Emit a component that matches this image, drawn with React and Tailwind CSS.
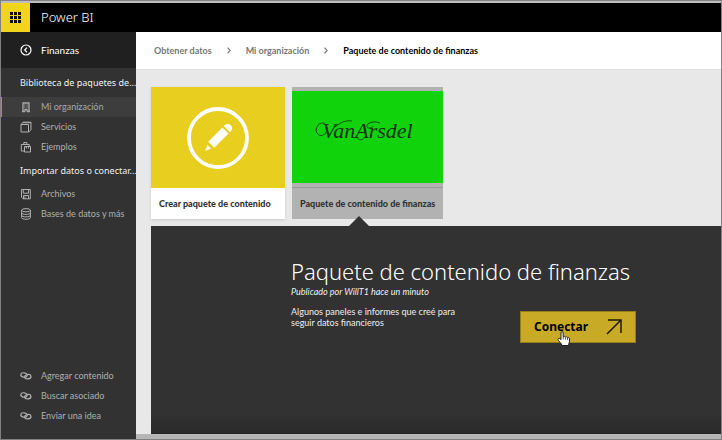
import React from "react";

const iconProps = {
  width: 12,
  height: 12,
  viewBox: "0 0 12 12",
  fill: "none",
  stroke: "currentColor",
  strokeWidth: 1,
  className: "shrink-0",
  "aria-hidden": true,
};

function BuildingIcon() {
  return (
    <svg {...iconProps}>
      <path d="M3 11V2h6v9M2 10.5h3M7 10.5h3M5 10.5V8.5h2v2" strokeWidth="1.3" />
      <path d="M4.2 4h1.2M6.6 4h1.2M4.2 6h1.2M6.6 6h1.2" />
    </svg>
  );
}

function StackIcon() {
  return (
    <svg {...iconProps}>
      <path d="M1 3.5h7.5V11H1z" />
      <path d="M1 3.5 3 1.2h8v7.6L8.7 11M3 1.7h8" />
    </svg>
  );
}

function BagIcon() {
  return (
    <svg {...iconProps}>
      <path d="M4 10H1.3V3.5h8V5M3.8 3.2V1.5h3v1.7" />
      <path d="M4.5 5.5h6V11h-6zM6.3 5.5v2M8.7 5.5v2" />
    </svg>
  );
}

function DiskIcon() {
  return (
    <svg {...iconProps}>
      <path d="M1.5 1.5h8.8v9.3H3L1.5 9.3z" />
      <path d="M3.3 1.5v3.7h5.2V1.5M3.5 10.8V7.5h5v3.3M5 8.5v2" />
    </svg>
  );
}

function DatabaseIcon() {
  return (
    <svg {...iconProps}>
      <ellipse cx="6" cy="2.2" rx="4.4" ry="1.6" />
      <path d="M1.6 2.2v7.4c0 .9 2 1.7 4.4 1.7s4.4-.8 4.4-1.7V2.2M1.6 4.8c0 .9 2 1.6 4.4 1.6s4.4-.7 4.4-1.6M1.6 7.3c0 .9 2 1.6 4.4 1.6s4.4-.7 4.4-1.6" />
    </svg>
  );
}

function LinkIcon() {
  return (
    <svg {...iconProps}>
      <ellipse cx="4" cy="5" rx="3.2" ry="2.2" transform="rotate(8 4 5)" strokeWidth="1.2" />
      <ellipse cx="7.8" cy="6.7" rx="3.2" ry="2.2" transform="rotate(-8 7.8 6.7)" strokeWidth="1.2" />
    </svg>
  );
}

function NavLink({ icon: Icon, label, active }) {
  return (
    <a
      href="#"
      className={
        active
          ? "flex h-5 items-center gap-[9px] border-l border-[#a3962b] bg-[#3d3d3d] pl-[18px] text-[#a8a8a8]"
          : "flex h-5 items-center gap-[9px] border-l border-transparent pl-[18px] text-[#b0b0b0]"
      }
    >
      <Icon />
      <span className="whitespace-nowrap text-[9px] leading-5">{label}</span>
    </a>
  );
}

function Sidebar() {
  return (
    <nav className="flex w-[135px] shrink-0 flex-col bg-[#323232] pb-[13px]">
      <button type="button" className="flex h-9 w-full items-center gap-[9px] bg-[#202020] pl-[19px] text-white">
        <svg {...iconProps} strokeWidth="1.2">
          <circle cx="6" cy="6" r="5" />
          <path d="M7 3.7 4.7 6 7 8.3" />
        </svg>
        <span className="text-[10px] leading-5">Finanzas</span>
      </button>
      <h2 className="flex h-[29px] items-center whitespace-nowrap pl-[19px] font-['Noto_Sans',sans-serif] text-[9px] text-[#f0f0f0]">
        Biblioteca de paquetes de...
      </h2>
      <NavLink icon={BuildingIcon} label="Mi organización" active />
      <NavLink icon={StackIcon} label="Servicios" />
      <NavLink icon={BagIcon} label="Ejemplos" />
      <h2 className="flex h-[27px] items-center whitespace-nowrap pl-[19px] font-['Noto_Sans',sans-serif] text-[9px] text-[#f0f0f0]">
        Importar datos o conectar...
      </h2>
      <NavLink icon={DiskIcon} label="Archivos" />
      <NavLink icon={DatabaseIcon} label="Bases de datos y más" />
      <div className="mt-auto">
        <NavLink icon={LinkIcon} label="Agregar contenido" />
        <NavLink icon={LinkIcon} label="Buscar asociado" />
        <NavLink icon={LinkIcon} label="Enviar una idea" />
      </div>
    </nav>
  );
}

function Chevron() {
  return (
    <svg width="4" height="7" viewBox="0 0 4 7" fill="none" stroke="#777" strokeWidth="1.1" aria-hidden="true">
      <path d="M.5.7 3.2 3.5.5 6.3" />
    </svg>
  );
}

function Breadcrumb() {
  return (
    <div className="flex h-[38px] items-center gap-[15px] border-b border-[#dcdcdc] bg-white pl-[18px] text-[9px] font-bold text-[#777]">
      <a href="#">Obtener datos</a>
      <Chevron />
      <a href="#">Mi organización</a>
      <Chevron />
      <span className="text-black">Paquete de contenido de finanzas</span>
    </div>
  );
}

function CreateCard() {
  return (
    <button type="button" className="flex w-[134px] flex-col bg-white text-left shadow-sm">
      <span className="flex h-[101px] w-full items-center justify-center bg-[#e8ce1e]">
        <svg width="62" height="62" viewBox="0 0 62 62" aria-hidden="true">
          <circle cx="31" cy="31" r="29" fill="none" stroke="#fff" strokeWidth="3.8" />
          <g fill="#fff" transform="translate(31 31) rotate(45)">
            <path d="M-4.3-10.5h8.6V9.5h-8.6z" />
            <path d="M-4.3-12.5v-1.3a4.3 4.3 0 0 1 8.6 0v1.3z" />
            <path d="M-2.6 12.5h5.2L0 18z" />
          </g>
        </svg>
      </span>
      <span className="flex h-[31px] items-center whitespace-nowrap pl-2 text-[9px] font-black text-[#333]">
        Crear paquete de contenido
      </span>
    </button>
  );
}

function FinanceCard() {
  return (
    <button type="button" className="relative flex w-[151px] flex-col bg-[#b2b2b2] text-left">
      <span className="flex h-[101px] w-full flex-col border-b border-[#999] pt-1 pb-1">
        <span className="relative flex flex-1 items-center justify-center bg-[#10d30b]">
          <span className="pb-3 font-['Liberation_Serif',serif] text-[22px] leading-7 text-[#102e10] italic">
            VanArsdel
          </span>
          <svg
            className="absolute top-[26px] left-[22px]"
            width="104"
            height="32"
            viewBox="0 0 104 32"
            fill="none"
            stroke="#102e10"
            strokeWidth=".8"
            aria-hidden="true"
          >
            <path d="M11 7C6 3 0 11 3 16c3 5 9 2 10-3" />
            <path d="M21 10C27 5 32 3 38 4" />
            <path d="M50 21c-2 3-7 2-6-1" />
            <path d="M66 6C59 3 51 7 53 10c1 2 5 1 6-1" />
          </svg>
        </span>
      </span>
      <span className="flex h-[31px] items-center whitespace-nowrap pl-2 text-[9px] font-black text-[#333]">
        Paquete de contenido de finanzas
      </span>
      <svg className="absolute top-[128px] left-[57px]" width="20" height="11" viewBox="0 0 20 11" aria-hidden="true">
        <path d="M0 11 10 1l10 10z" fill="#323232" />
      </svg>
    </button>
  );
}

function ConnectButton() {
  return (
    <button
      type="button"
      className="relative flex h-8 w-[116px] shrink-0 items-center justify-between border border-[#967f1b] bg-[#c8aa26] pr-[13px] pl-[13px] text-black"
    >
      <span className="font-['Noto_Sans',sans-serif] text-[12px] font-bold">Conectar</span>
      <svg width="16" height="16" viewBox="0 0 16 16" fill="none" stroke="#201a05" strokeWidth="1.5" aria-hidden="true">
        <path d="M1 15 15 1M2 1h13v13" />
      </svg>
      <svg className="absolute top-[19px] left-9" width="14" height="15" viewBox="0 0 14 15" aria-hidden="true">
        <path
          d="M4 1.8C4 .3 6.2.3 6.2 1.8v4c.5-.7 2-.5 2.2.3.6-.6 1.9-.3 2.1.5.8-.4 2 0 2 1.2v2.5c0 1.3-.9 2.2-.9 4.2H5.1C4.7 12.5 1 9.8 1 8.3c0-1.2 1.5-1.2 2.2-.4l.8.8z"
          fill="#fff"
          stroke="#111"
          strokeWidth=".9"
        />
        <path d="M6.2 6v2.5M8.4 6.5v2.2M10.5 7v2" stroke="#111" strokeWidth=".7" />
      </svg>
    </button>
  );
}

function DetailPanel() {
  return (
    <section className="mt-[7px] flex-1 bg-[#323232] bg-linear-to-b from-[#323232] from-90% to-[#292929] pt-[31px] pl-[140px] text-white">
      <h1 className="whitespace-nowrap font-['Noto_Sans',sans-serif] text-[22px] leading-7 font-light">
        Paquete de contenido de finanzas
      </h1>
      <div className="flex items-end gap-[69px]">
        <div className="w-[160px] shrink-0 pt-px pb-[15px]">
          <p className="whitespace-nowrap text-[9px] leading-3 text-[#eee] italic">Publicado por WillT1 hace un minuto</p>
          <p className="mt-2 whitespace-nowrap text-[9px] leading-[11px] text-[#eee]">
            Algunos paneles e informes que creé para
            <br />
            seguir datos financieros
          </p>
        </div>
        <ConnectButton />
      </div>
    </section>
  );
}

export default function App() {
  return (
    <div className="flex min-h-screen flex-col border border-[#808080] bg-[#e8e8e8] font-['Lato',sans-serif]">
      <header className="flex h-[31px] items-center border-t-2 border-[#bdbdbd] bg-black text-white">
        <button
          type="button"
          aria-label="Aplicaciones"
          className="flex h-full w-[29px] items-center justify-center bg-[#f1d51d]"
        >
          <svg width="11" height="11" viewBox="0 0 11 11" fill="#111" aria-hidden="true">
            <path d="M0 0h3v3H0zM4 0h3v3H4zM8 0h3v3H8zM0 4h3v3H0zM4 4h3v3H4zM8 4h3v3H8zM0 8h3v3H0zM4 8h3v3H4zM8 8h3v3H8z" />
          </svg>
        </button>
        <span className="pl-[11px] font-['Noto_Sans',sans-serif] text-[13px] font-light">Power BI</span>
      </header>
      <div className="flex flex-1">
        <Sidebar />
        <main className="flex min-w-0 flex-1 flex-col">
          <Breadcrumb />
          <div className="flex flex-1 flex-col pt-[17px] pl-[15px]">
            <div className="flex gap-[7px]">
              <CreateCard />
              <FinanceCard />
            </div>
            <DetailPanel />
          </div>
          <div className="h-[5px] bg-[#b5b5b5]" />
        </main>
      </div>
    </div>
  );
}
